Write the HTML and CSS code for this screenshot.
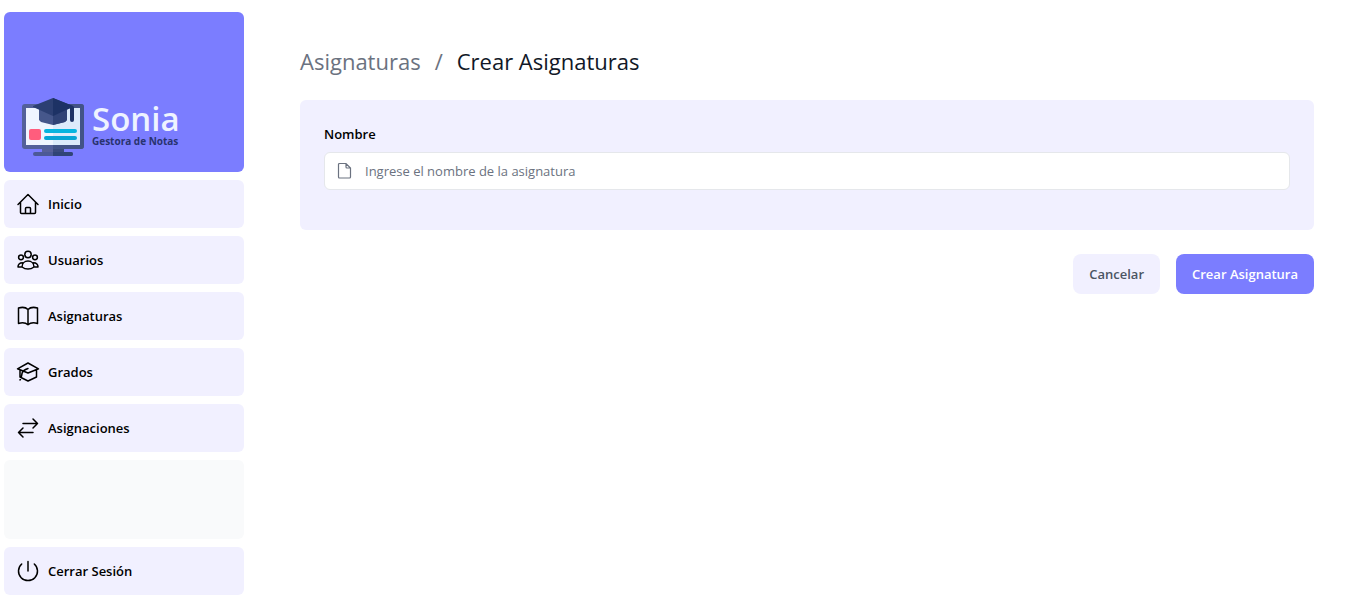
FILE: index.html
```html
<!DOCTYPE html>
<html lang="es">
<head>
<meta charset="utf-8">
<meta name="viewport" content="width=device-width, initial-scale=1">
<title>Crear Asignaturas</title>
<link rel="stylesheet" href="styles.css">
</head>
<body>
<div class="layout">
  <aside class="sidebar">
    <a class="brand" href="#">
      <svg class="brand-logo" viewBox="0 0 62 60" aria-hidden="true">
        <path fill="#576098" d="M20 50h22v6H20z"/>
        <path fill="#3a4a7d" d="M31 50h11v6H31z"/>
        <rect x="11" y="55" width="40" height="4" rx="2" fill="#4c5996"/>
        <path fill="#304476" d="M31 55h18a2 2 0 0 1 0 4H31z"/>
        <rect x="0" y="7" width="62" height="45" rx="3" fill="#53609a"/>
        <path fill="#425386" d="M31 7h28a3 3 0 0 1 3 3v39a3 3 0 0 1-3 3H31z"/>
        <path fill="#f0f5ff" d="M4 11h27v37H4z"/>
        <path fill="#dcebfb" d="M31 11h27v37H31z"/>
        <rect x="7" y="32" width="12" height="11" rx="2" fill="#ff5d7d"/>
        <rect x="22" y="32" width="33" height="4" rx="2" fill="#06b4df"/>
        <rect x="22" y="39" width="33" height="4" rx="2" fill="#06a5d5"/>
        <path fill="#46578b" d="M17 12h28v11l-2 2-12 3-12-3-2-2z"/>
        <path fill="#304376" d="M31 12h14v11l-2 2-12 3z"/>
        <path fill="#2c3f72" d="M31 1 11 9v1l20 9 20-9V9z"/>
        <path fill="#1d3265" d="m31 1 20 8 1 1v13a2 2 0 0 1-4 0V11l-17 8z"/>
      </svg>
      <span class="brand-text"><strong>Sonia</strong><small>Gestora de Notas</small></span>
    </a>
    <nav class="menu">
      <a class="menu-item" href="#">
        <svg class="icon" viewBox="0 0 24 24" aria-hidden="true"><path d="M2 12.500 12 2.500l10 10M4.500 10.500v10a1 1 0 0 0 1 1h13a1 1 0 0 0 1-1v-10M9.500 21.500v-5a1 1 0 0 1 1-1h3a1 1 0 0 1 1 1v5"/></svg>
        Inicio</a>
      <a class="menu-item" href="#">
        <svg class="icon" viewBox="0 0 24 24" aria-hidden="true"><circle cx="12" cy="6.500" r="3.200"/><circle cx="5" cy="9.300" r="2.400"/><circle cx="19" cy="9.300" r="2.400"/><path d="M6 19c0-3.500 2.500-6 6-6s6 2.500 6 6c-3.500 2.700-8.500 2.700-12 0zM6 19H2c0-2.500 1.500-4.300 4.500-4.300M18 19h4c0-2.500-1.500-4.300-4.500-4.300"/></svg>
        Usuarios</a>
      <a class="menu-item" href="#">
        <svg class="icon" viewBox="0 0 24 24" aria-hidden="true"><path d="M12 5.500c-2-2-6-2.500-9.500-1.500v15.500c3.500-1 7.500-.5 9.500 1.200 2-1.700 6-2.200 9.500-1.200V4c-3.500-1-7.500-.5-9.500 1.500zv15"/></svg>
        Asignaturas</a>
      <a class="menu-item" href="#">
        <svg class="icon" viewBox="0 0 24 24" aria-hidden="true"><path d="M1.500 8.800 12 3l10.500 5.800L12 13zM4 10v7l8 4 8.500-4V10M12 8.500c-3 1-5.500 2.500-6 5s-.5 4.500-2 6.500"/></svg>
        Grados</a>
      <a class="menu-item" href="#">
        <svg class="icon" viewBox="0 0 24 24" aria-hidden="true"><path d="M7 7.500h14.500M17 3l4.500 4.500L17 12M17 16.500H2.500M7 12l-4.500 4.500L7 21"/></svg>
        Asignaciones</a>
      <div class="menu-space"></div>
      <button class="menu-item" type="button">
        <svg class="icon" viewBox="0 0 24 24" aria-hidden="true"><path d="M12 2.500v9.500M5.700 5a9.500 9.500 0 1 0 12.600 0"/></svg>
        Cerrar Sesión</button>
    </nav>
  </aside>
  <main class="content">
    <nav class="breadcrumb" aria-label="Ruta">
      <a href="#">Asignaturas</a><span>/</span><h1>Crear Asignaturas</h1>
    </nav>
    <form>
      <div class="card">
        <label for="nombre">Nombre</label>
        <div class="field">
          <svg class="field-icon" viewBox="0 0 18 18" aria-hidden="true"><path d="M3.500 1.500h6.500l4.500 4.500v9a1 1 0 0 1-1 1h-10a1 1 0 0 1-1-1v-12.500a1 1 0 0 1 1-1zM10 1.500V5a1 1 0 0 0 1 1h3.500"/></svg>
          <input id="nombre" type="text" placeholder="Ingrese el nombre de la asignatura">
        </div>
      </div>
      <div class="actions">
        <a class="button" href="#">Cancelar</a>
        <button class="button button-primary" type="submit">Crear Asignatura</button>
      </div>
    </form>
  </main>
</div>
</body>
</html>
```
FILE: styles.css
```css
*, *::before, *::after { box-sizing: border-box; }
body { margin: 0; background: #fff; color: #000; font: 14px/20px "Segoe UI", "Open Sans", "Noto Sans", sans-serif; }
a { color: inherit; text-decoration: none; }
button, input { font: inherit; color: inherit; }
.layout { display: flex; min-height: 100vh; }
.sidebar { display: flex; flex-direction: column; flex: 0 0 248px; gap: 8px; padding: 12px 4px 11px; }
.brand { display: flex; align-items: flex-end; gap: 8px; height: 160px; padding: 15px 18px; border-radius: 6px; background: #7b7dff; }
.brand-logo { width: 62px; height: 60px; }
.brand-text { display: flex; flex-direction: column; padding-bottom: 10px; }
.brand-text strong { color: #eef3ff; font: 600 33px/32px "Open Sans", sans-serif; }
.brand-text small { color: #29336f; font: 700 10px/12px "Open Sans", sans-serif; }
.menu { display: flex; flex: 1; flex-direction: column; gap: 8px; }
.menu-item { display: flex; align-items: center; gap: 8px; width: 100%; height: 48px; padding: 12px; border: 0; border-radius: 6px; background: #f1f0ff; font-size: 13px; font-weight: 600; cursor: pointer; }
.menu-space { flex: 1; border-radius: 6px; background: #f9fafb; }
.icon { width: 24px; height: 24px; fill: none; stroke: currentColor; stroke-width: 1.500; stroke-linecap: round; stroke-linejoin: round; }
.content { flex: 1; min-width: 0; padding: 43px 41px 44px 52px; }
.breadcrumb { display: flex; align-items: center; gap: 14px; margin-bottom: 21px; color: #6b7280; font-size: 22px; line-height: 36px; }
.breadcrumb h1 { margin: 0; color: #111827; font: inherit; }
.card { padding: 24px 24px 40px; border-radius: 6px; background: #f1f0ff; }
.card label { display: block; margin-bottom: 8px; font-size: 13px; font-weight: 600; }
.field { display: flex; align-items: center; gap: 11px; height: 38px; padding: 0 11px; border: 1px solid #e5e7eb; border-radius: 6px; background: #fff; }
.field-icon { width: 18px; height: 18px; flex: none; fill: none; stroke: #6b7280; stroke-width: 1.200; }
.field input { flex: 1; min-width: 0; padding: 0; border: 0; outline: 0; background: none; font-size: 13px; }
.field input::placeholder { color: #6b7280; opacity: 1; }
.actions { display: flex; justify-content: flex-end; gap: 16px; margin-top: 24px; }
.button { display: flex; align-items: center; height: 40px; padding: 0 16px; border: 0; border-radius: 8px; background: #f1f0ff; color: #4b5563; font-size: 13px; font-weight: 600; cursor: pointer; }
.button-primary { background: #7b7dff; color: #fff; }
```
